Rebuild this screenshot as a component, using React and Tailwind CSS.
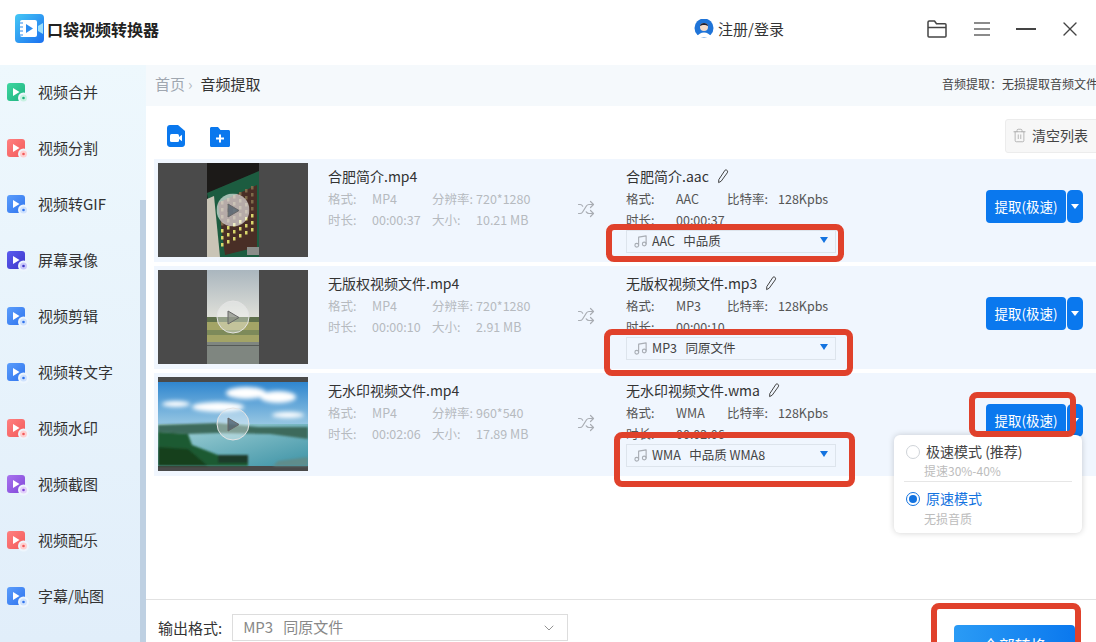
import React from 'react';
import { Music, Shuffle, Trash2, X, ChevronDown } from 'lucide-react';

const NAV = [
  { label: '视频合并', from: '#3ed6a0', to: '#1fb37f', badge: '#c8f2e2' },
  { label: '视频分割', from: '#ff8080', to: '#f25a5a', badge: '#ffd0d0' },
  { label: '视频转GIF', from: '#5b9dfb', to: '#2f74ee', badge: '#cfe2fd' },
  { label: '屏幕录像', from: '#5a5cf0', to: '#3e36c8', badge: '#c9c8fa' },
  { label: '视频剪辑', from: '#5b9dfb', to: '#2f74ee', badge: '#cfe2fd' },
  { label: '视频转文字', from: '#5b9dfb', to: '#2f74ee', badge: '#cfe2fd' },
  { label: '视频水印', from: '#ff8080', to: '#f25a5a', badge: '#ffd0d0' },
  { label: '视频截图', from: '#a873ee', to: '#8046d8', badge: '#e2d0fa' },
  { label: '视频配乐', from: '#ff8080', to: '#f25a5a', badge: '#ffd0d0' },
  { label: '字幕/贴图', from: '#5b9dfb', to: '#2f74ee', badge: '#cfe2fd' },
];

const ROWS = [
  {
    name: '合肥简介.mp4', res: '720*1280', time: '00:00:37', size: '10.21 MB',
    out: '合肥简介.aac', fmt: 'AAC', preset: 'AAC   中品质', thumb: 'board',
  },
  {
    name: '无版权视频文件.mp4', res: '720*1280', time: '00:00:10', size: '2.91 MB',
    out: '无版权视频文件.mp3', fmt: 'MP3', preset: 'MP3   同原文件', thumb: 'field',
  },
  {
    name: '无水印视频文件.mp4', res: '960*540', time: '00:02:06', size: '17.89 MB',
    out: '无水印视频文件.wma', fmt: 'WMA', preset: 'WMA   中品质 WMA8', thumb: 'lake',
  },
];

function NavIcon({ from, to, badge, id }) {
  return (
    <svg width="22" height="22" viewBox="0 0 22 22" className="shrink-0">
      <defs>
        <linearGradient id={id} x1="0" y1="0" x2="1" y2="1">
          <stop offset="0" stopColor={from} />
          <stop offset="1" stopColor={to} />
        </linearGradient>
      </defs>
      <rect x="0" y="1" width="18" height="18" rx="3" fill={`url(#${id})`} />
      <path d="M6 6 L12.5 10 L6 14 Z" fill="#fff" />
      <circle cx="16.5" cy="16" r="5.5" fill="#eef6fd" />
      <circle cx="16.5" cy="16" r="3.5" fill={badge} />
      <circle cx="16.5" cy="16" r="1.3" fill={to} />
    </svg>
  );
}

function Sidebar() {
  return (
    <aside className="relative w-[146px] shrink-0 bg-gradient-to-b from-[#eef8fd] to-[#e1eefa]">
      {NAV.map((item, i) => (
        <div key={item.label} className="flex h-14 items-center pl-[7px]">
          <NavIcon {...item} id={`nav-${i}`} />
          <span className="ml-[9px] pb-[2px] text-[15px] text-[#333]">{item.label}</span>
        </div>
      ))}
      <div className="absolute right-0 top-[135px] bottom-0 w-[6px] bg-[#bed0e2]" />
    </aside>
  );
}

function PlayOverlay({ kind }) {
  const face = kind === 'board' ? 'bg-white/60 border-transparent' : 'bg-white/35 border-[#e4e4e4]';
  return (
    <div className={`absolute left-1/2 top-1/2 flex h-[33px] w-[33px] -translate-x-1/2 -translate-y-1/2 items-center justify-center rounded-full border ${face}`}>
      <svg width="14" height="16" viewBox="0 0 14 16">
        <path d="M1.5 1.5 L12.5 8 L1.5 14.5 Z" fill={kind === 'field' ? '#8d9187' : '#4a5a68'} fillOpacity="0.75" stroke="#666" strokeWidth="1" strokeLinejoin="round" />
      </svg>
    </div>
  );
}

function BoardPicture() {
  return (
    <svg viewBox="0 0 52 94" className="h-full w-[52px]" preserveAspectRatio="none">
      <defs>
        <filter id="boardsoft"><feGaussianBlur stdDeviation="0.5" /></filter>
      </defs>
      <rect width="52" height="94" fill="#1c1a18" />
      <g filter="url(#boardsoft)">
        <path d="M0 30 L52 8 L52 94 L10 94 Z" fill="#1f5c40" />
        <path d="M0 36 L7 33 L13 94 L0 94 Z" fill="#c9c4b6" />
        <path d="M11 40 L50 22 L50 84 L18 92 Z" fill="#4a2d25" />
        {[0, 1, 2, 3, 4, 5].map((c) =>
          [0, 1, 2, 3, 4, 5, 6].map((r) => (
            <rect
              key={`${c}-${r}`}
              x={14 + c * 6}
              y={38 + r * 7 - c * 3}
              width="2.5"
              height="3.5"
              fill={r > 3 ? '#d8d66a' : '#7d6a4a'}
            />
          )),
        )}
        <rect x="40" y="84" width="12" height="8" fill="#8b8d8a" />
      </g>
    </svg>
  );
}

function FieldPicture() {
  return (
    <svg viewBox="0 0 52 94" className="h-full w-[52px]" preserveAspectRatio="none">
      <defs>
        <linearGradient id="sky" x1="0" y1="0" x2="0" y2="1">
          <stop offset="0" stopColor="#aab6be" />
          <stop offset="1" stopColor="#e2e2da" />
        </linearGradient>
        <filter id="fieldsoft"><feGaussianBlur stdDeviation="0.7" /></filter>
      </defs>
      <rect width="52" height="50" fill="url(#sky)" />
      <g filter="url(#fieldsoft)">
        <rect y="48" width="52" height="26" fill="#a3a466" />
        <rect y="47" width="52" height="5" fill="#5f6f4c" />
        <rect y="60" width="52" height="5" fill="#7d8a5a" />
      </g>
      <rect y="72" width="52" height="22" fill="#7f8680" />
      <rect y="75" width="52" height="1" fill="#555a56" />
    </svg>
  );
}

function LakePicture() {
  return (
    <svg viewBox="0 0 150 94" className="h-full w-full" preserveAspectRatio="none">
      <defs>
        <linearGradient id="lakesky" x1="0" y1="0" x2="0" y2="1">
          <stop offset="0" stopColor="#2f86cf" />
          <stop offset="1" stopColor="#a9d2e6" />
        </linearGradient>
        <linearGradient id="water" x1="0" y1="0" x2="1" y2="1">
          <stop offset="0" stopColor="#a9d6da" />
          <stop offset="1" stopColor="#3e93a6" />
        </linearGradient>
        <filter id="soft"><feGaussianBlur stdDeviation="2" /></filter>
        <filter id="softer"><feGaussianBlur stdDeviation="0.8" /></filter>
      </defs>
      <rect width="150" height="94" fill="#4a4a4a" />
      <rect y="5" width="150" height="50" fill="url(#lakesky)" />
      <g fill="#fff" filter="url(#soft)">
        <ellipse cx="88" cy="16" rx="20" ry="6" />
        <ellipse cx="120" cy="20" rx="18" ry="6" />
        <ellipse cx="60" cy="30" rx="26" ry="5" />
        <ellipse cx="18" cy="27" rx="14" ry="3" />
        <ellipse cx="130" cy="38" rx="16" ry="3" />
      </g>
      <rect y="47" width="150" height="42" fill="url(#water)" />
      <g filter="url(#softer)">
        <path d="M0 48 L60 46 L100 50 L150 50 L150 62 L112 57 L60 56 L30 57 L0 55 Z" fill="#3d6b5c" />
        <path d="M0 55 L30 57 L34 68 L60 78 L90 84 L90 89 L0 89 Z" fill="#1f5a33" />
        <path d="M0 70 L30 72 L50 89 L0 89 Z" fill="#17401f" />
        <path d="M120 84 L150 80 L150 89 L115 89 Z" fill="#5e8d8c" />
        <rect x="60" y="78" width="30" height="8" fill="#1d3a2a" />
      </g>
    </svg>
  );
}

function Thumb({ kind }) {
  return (
    <div className="relative ml-1 mt-1 flex h-[94px] w-[150px] shrink-0 justify-center bg-[#4a4a4a]">
      {kind === 'board' && <BoardPicture />}
      {kind === 'field' && <FieldPicture />}
      {kind === 'lake' && <LakePicture />}
      <PlayOverlay kind={kind} />
    </div>
  );
}

function EditPen() {
  return (
    <svg width="12" height="15" viewBox="0 0 12 15" fill="none" stroke="#444" strokeWidth="1" strokeLinejoin="round" className="ml-[8px]">
      <path d="M8 1.2 C8.8 0.6 10 1 10.4 1.8 C10.8 2.6 10.7 3.2 10.2 3.9 L4.2 12.2 L1.6 13.6 L1.8 10.6 Z" />
    </svg>
  );
}

function FileRow({ row }) {
  return (
    <div className="ml-2 flex h-[103px] bg-[#f0f6fe]">
      <Thumb kind={row.thumb} />
      <div className="ml-5 w-[249px] shrink-0 pt-[7px]">
        <div className="h-5 text-[14px] leading-5 text-[#333]">{row.name}</div>
        <div className="mt-[2px] grid grid-cols-[44px_60px_44px_1fr] text-[12.5px] leading-[21px] text-[#b6babf]">
          <span>格式:</span>
          <span>MP4</span>
          <span>分辨率:</span>
          <span>{row.res}</span>
          <span>时长:</span>
          <span>{row.time}</span>
          <span>大小:</span>
          <span>{row.size}</span>
        </div>
      </div>
      <div className="flex w-[49px] shrink-0 items-start pt-[41px]">
        <Shuffle size={18} strokeWidth={1.6} className="text-[#a9adb3]" />
      </div>
      <div className="w-[360px] shrink-0 pt-[7px]">
        <div className="flex h-5 items-center text-[14px] text-[#333]">
          {row.out}
          <EditPen />
        </div>
        <div className="mt-[2px] grid grid-cols-[50px_51px_51px_1fr] text-[12.5px] leading-[21px] text-[#555]">
          <span>格式:</span>
          <span>{row.fmt}</span>
          <span>比特率:</span>
          <span>128Kpbs</span>
          <span>时长:</span>
          <span>{row.time}</span>
        </div>
        <div className="relative flex h-[23px] w-[210px] items-center border border-[#dde4ec] bg-[#f0f6fe] pl-[6px] text-[12.5px] text-[#444]">
          <Music size={15} strokeWidth={1.8} className="mr-[4px] text-[#a8adb4]" />
          <span className="whitespace-pre">{row.preset}</span>
          <span className="absolute right-[7px] top-[6px] h-0 w-0 border-x-[4px] border-t-[6px] border-x-transparent border-t-[#1373e0]" />
        </div>
      </div>
      <div className="mt-[31px] flex h-[33px] shrink-0 text-[13.5px] text-white">
        <div className="flex w-[80px] items-center justify-center rounded-[4px] bg-[#0a78ee]">提取(极速)</div>
        <div className="ml-px flex w-[16px] items-center justify-center rounded-[5px] bg-[#0a78ee]">
          <span className="h-0 w-0 border-x-[4px] border-t-[5px] border-x-transparent border-t-white" />
        </div>
      </div>
    </div>
  );
}

function SpeedPopup() {
  return (
    <div className="absolute left-[894px] top-[435px] z-20 h-[98px] w-[188px] rounded-[6px] bg-white px-[10px] pt-[7px] shadow-[0_0_6px_rgba(0,0,0,0.18)]">
      <div className="flex h-[19px] items-center text-[14px] text-[#444]">
        <span className="ml-[2px] mr-[6px] h-[14px] w-[14px] rounded-full border border-[#cfd3d8]" />
        极速模式 (推荐)
      </div>
      <div className="ml-[20px] mt-[1px] text-[12px] leading-[18px] text-[#bcbcbc]">提速30%-40%</div>
      <div className="mt-[1px] h-px w-[168px] bg-[#e6e6e6]" />
      <div className="mt-[7px] flex h-[19px] items-center text-[14px] text-[#1373e0]">
        <span className="ml-[2px] mr-[6px] flex h-[14px] w-[14px] items-center justify-center rounded-full border border-[#1373e0]">
          <span className="h-[8px] w-[8px] rounded-full bg-[#1373e0]" />
        </span>
        原速模式
      </div>
      <div className="ml-[20px] mt-[2px] text-[12px] leading-[18px] text-[#bcbcbc]">无损音质</div>
    </div>
  );
}

const MARKS = [
  'left-[606px] top-[224px] h-[38px] w-[238px]',
  'left-[604px] top-[329px] h-[47px] w-[249px]',
  'left-[614px] top-[432px] h-[55px] w-[241px]',
  'left-[969px] top-[392px] h-[45px] w-[107px]',
  'left-[931px] top-[603px] h-[60px] w-[150px]',
];

export default function App() {
  return (
    <div className="relative flex h-[642px] w-[1096px] flex-col overflow-hidden bg-white font-['Noto_Sans_CJK_SC',sans-serif]">
      <header className="flex h-[65px] shrink-0 items-center pb-[7px]">
        <svg width="30" height="30" viewBox="0 0 30 30" className="ml-[15px]">
          <defs>
            <linearGradient id="logo" x1="0" y1="0" x2="1" y2="1">
              <stop offset="0" stopColor="#45c8f5" />
              <stop offset="1" stopColor="#1a6ff0" />
            </linearGradient>
          </defs>
          <rect width="29" height="29" rx="4" fill="url(#logo)" />
          <rect x="5" y="6" width="17" height="17" rx="2" fill="#fff" />
          <path d="M11 10 L18 14.5 L11 19 Z" fill="#2b8cf0" />
          <path d="M5 9h3M5 13h3M5 17h3M5 21h3" stroke="#2b8cf0" strokeWidth="1.2" />
          <path d="M23 12 L28 9 L28 20 L23 17 Z" fill="#9fe0fa" />
        </svg>
        <span className="ml-[2px] text-[16px] font-bold text-[#222]">口袋视频转换器</span>
        <svg width="20" height="20" viewBox="0 0 20 20" className="ml-[535px]">
          <circle cx="10" cy="9" r="9.5" fill="#1f74d8" />
          <circle cx="10" cy="8" r="4" fill="#f6dcc8" />
          <path d="M3 18 C5 12 15 12 17 18 Z" fill="#fff" />
          <path d="M6 7 C6 3 14 3 14 7 C12 5.5 8 5.5 6 7 Z" fill="#223" />
        </svg>
        <span className="ml-1 text-[15px] text-[#333]">注册/登录</span>
        <svg width="20" height="18" viewBox="0 0 20 18" fill="none" stroke="#444" strokeWidth="1.5" className="ml-[143px]" strokeLinejoin="round">
          <path d="M1 2.2 C1 1.5 1.5 1 2.2 1 H7.5 L9.5 3.8 H18 C18.6 3.8 19 4.2 19 4.8 V16 C19 16.6 18.6 17 18 17 H2 C1.4 17 1 16.6 1 16 Z" />
          <path d="M1 7.5 H19" />
        </svg>
        <svg width="18" height="16" viewBox="0 0 18 16" stroke="#666" strokeWidth="1.4" className="ml-[26px]">
          <path d="M1 2h16M1 8h16M1 14h16" />
        </svg>
        <div className="ml-[25px] h-[2px] w-[20px] bg-[#444]" />
        <X size={24} strokeWidth={1.4} className="ml-[22px] text-[#444]" />
      </header>

      <div className="flex min-h-0 flex-1">
        <Sidebar />
        <main className="flex min-w-0 flex-1 flex-col">
          <div className="flex h-[41px] shrink-0 items-center justify-between overflow-hidden whitespace-nowrap bg-[#f5f9fc] pb-[3px] pl-[9px]">
            <div className="flex items-center text-[15px]">
              <span className="text-[#a0a7b0]">首页</span>
              <span className="mx-[3px] text-[#b4bac1]">›</span>
              <span className="ml-[5px] text-[#333]">音频提取</span>
            </div>
            <span className="-mr-[2px] text-[12px] text-[#444]">音频提取：无损提取音频文件</span>
          </div>

          <div className="flex h-[53px] shrink-0 items-start overflow-hidden">
            <svg width="18" height="22" viewBox="0 0 18 22" className="ml-[21px] mt-[19px]">
              <path d="M3 0 H11 L18 6 V19 C18 20.6 16.8 22 15 22 H3 C1.3 22 0 20.6 0 19 V3 C0 1.3 1.3 0 3 0 Z" fill="#0a78ee" />
              <rect x="3" y="9" width="9" height="8" rx="1.5" fill="#fff" />
              <path d="M12 12 L15 9.8 V16.2 L12 14 Z" fill="#fff" />
            </svg>
            <svg width="20" height="20" viewBox="0 0 20 20" className="ml-[25px] mt-[21px]">
              <path d="M1.5 0 H8 L10.5 3 H18.5 C19.4 3 20 3.6 20 4.5 V18.5 C20 19.4 19.4 20 18.5 20 H1.5 C0.6 20 0 19.4 0 18.5 V1.5 C0 0.6 0.6 0 1.5 0 Z" fill="#0a78ee" />
              <path d="M10 7.5 V15.5 M6 11.5 H14" stroke="#fff" strokeWidth="2" />
            </svg>
            <div className="ml-auto -mr-[2px] mt-[13px] flex h-[34px] w-[93px] items-center rounded-l-[3px] border border-[#ececec] bg-[#f7f7f7] pb-[2px] pl-[6px] text-[14px] text-[#444]">
              <Trash2 size={15} strokeWidth={1.1} className="mr-[5px] text-[#9a9a9a]" />
              清空列表
            </div>
          </div>

          <div className="flex min-h-0 flex-1 flex-col gap-1">
            {ROWS.map((row) => (
              <FileRow key={row.name} row={row} />
            ))}
          </div>

          <footer className="flex h-[43px] shrink-0 items-start border-t border-[#e2e2e2] pl-3 pt-[14px]">
            <span className="mt-[2px] text-[15px] leading-[24px] text-[#333]">输出格式:</span>
            <div className="ml-[10px] flex h-[27px] w-[336px] items-center justify-between border border-[#ddd] pl-[10px] pr-[10px] text-[15px] text-[#888]">
              <span className="whitespace-pre">MP3   同原文件</span>
              <ChevronDown size={16} strokeWidth={1.2} className="text-[#777]" />
            </div>
            <div className="ml-[386px] mt-[11px] flex h-10 w-[121px] shrink-0 items-center justify-center rounded-t-[4px] bg-gradient-to-r from-[#2a9bf5] to-[#0a78ee] text-[16px] text-white">
              全部转换
            </div>
          </footer>
        </main>
      </div>

      <SpeedPopup />
      {MARKS.map((cls) => (
        <div key={cls} className={`absolute z-30 rounded-[8px] border-[6px] border-[#e0412b] ${cls}`} />
      ))}
    </div>
  );
}
